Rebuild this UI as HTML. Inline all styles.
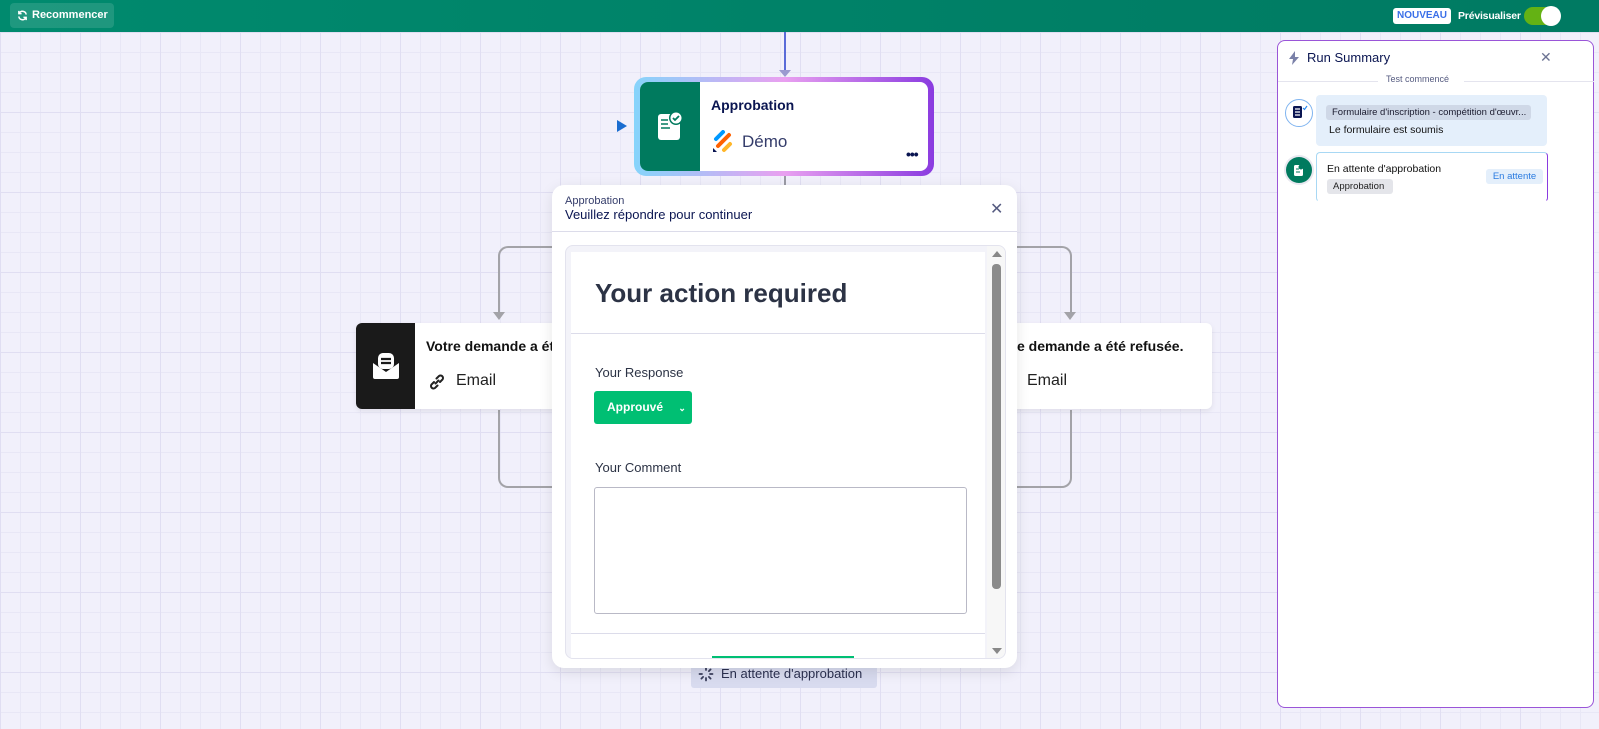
<!DOCTYPE html>
<html><head><meta charset="utf-8"><style>
*{box-sizing:border-box;margin:0;padding:0}
body{width:1599px;height:729px;overflow:hidden;position:relative;font-family:"Liberation Sans",sans-serif;color:#0a1551;
background-color:#f1f0fb;
background-image:linear-gradient(#e0def2 1px,transparent 1px),linear-gradient(90deg,#e0def2 1px,transparent 1px),linear-gradient(#e8e7f6 1px,transparent 1px),linear-gradient(90deg,#e8e7f6 1px,transparent 1px);
background-size:80px 80px,80px 80px,20px 20px,20px 20px;background-position:0 32px,0 32px,0 32px,0 32px}
.abs{position:absolute}
.top{left:0;top:0;width:1599px;height:32px;background:linear-gradient(90deg,#008a6e,#007a62)}
.btn{left:10px;top:3px;width:104px;height:25px;background:rgba(255,255,255,.12);border-radius:4px;color:#fff;font-size:11px;font-weight:bold;line-height:25px;padding-left:22px}
.line{background:#9a9aa4}
</style></head><body>
<div class="abs top"></div>
<div class="abs btn"><svg class="abs" style="left:7px;top:7px" width="11" height="11" viewBox="0 0 12 12" fill="none" stroke="#fff" stroke-width="1.6"><path d="M10 5A4 4 0 0 0 2.5 3.5M2 7a4 4 0 0 0 7.5 1.5"/><path d="M2 1v3h3M10 11V8H7"/></svg>Recommencer</div>
<div class="abs" style="left:1393px;top:8px;width:58px;height:16px;background:#fff;border-radius:3px;color:#3a6fe8;font-size:10px;font-weight:bold;text-align:center;line-height:16px">NOUVEAU</div>
<div class="abs" style="left:1458px;top:10px;color:#fff;font-size:10.5px;font-weight:bold;letter-spacing:-0.2px">Prévisualiser</div>
<div class="abs" style="left:1524px;top:7px;width:36px;height:18px;background:#64b214;border-radius:9px"></div>
<div class="abs" style="left:1541px;top:6px;width:20px;height:20px;background:#fff;border-radius:50%"></div>

<!-- connectors -->
<div class="abs" style="left:784px;top:32px;width:2px;height:42px;background:#5a6bd8"></div>
<div class="abs" style="left:779px;top:70px;border:6px solid transparent;border-top:7px solid #9a9ad0;border-bottom:0"></div>
<div class="abs line" style="left:784px;top:175px;width:2px;height:12px"></div>
<div class="abs" style="left:498px;top:246px;width:60px;height:70px;border:2px solid #a3a3a8;border-right:0;border-bottom:0;border-radius:10px 0 0 0"></div>
<div class="abs" style="left:493px;top:312px;border:6px solid transparent;border-top:8px solid #a3a3a8;border-bottom:0"></div>
<div class="abs" style="left:498px;top:410px;width:60px;height:78px;border:2px solid #a3a3a8;border-right:0;border-top:0;border-radius:0 0 0 10px"></div>
<div class="abs" style="left:1012px;top:246px;width:60px;height:70px;border:2px solid #a3a3a8;border-left:0;border-bottom:0;border-radius:0 10px 0 0"></div>
<div class="abs" style="left:1064px;top:312px;border:6px solid transparent;border-top:8px solid #a3a3a8;border-bottom:0"></div>
<div class="abs" style="left:1012px;top:410px;width:60px;height:78px;border:2px solid #a3a3a8;border-left:0;border-top:0;border-radius:0 0 10px 0"></div>

<!-- approbation node -->
<div class="abs" style="left:617px;top:120px;border:6px solid transparent;border-left:10px solid #1a6dd0;border-right:0"></div>
<div class="abs" style="left:634px;top:77px;width:300px;height:99px;border-radius:12px;background:linear-gradient(90deg,#86d4fb,#e9a0f0 50%,#8a3be0)"></div>
<div class="abs" style="left:640px;top:82px;width:288px;height:89px;border-radius:8px;background:#fff;overflow:hidden">
 <div class="abs" style="left:0;top:0;width:60px;height:89px;background:#007a5e"></div>
 <svg class="abs" style="left:16px;top:28px" width="30" height="32" viewBox="0 0 30 32"><rect x="2" y="4" width="22" height="26" rx="3" fill="#fff"/><circle cx="20" cy="8" r="7" fill="#007a5e"/><circle cx="20" cy="8" r="5.5" fill="#fff"/><path d="M17 8l2 2 4-4" stroke="#007a5e" stroke-width="1.8" fill="none"/><path d="M5 10h7M5 14h7M5 18h9" stroke="#007a5e" stroke-width="1.6"/></svg>
 <div class="abs" style="left:71px;top:15px;font-size:14px;font-weight:bold">Approbation</div>
 <svg class="abs" style="left:72px;top:48px" width="22" height="24" viewBox="0 0 22 24"><path d="M4 9L11 2" stroke="#0099ff" stroke-width="4" stroke-linecap="round"/><path d="M6 16L17 5" stroke="#ff6100" stroke-width="4" stroke-linecap="round"/><path d="M12 20L18 14" stroke="#ffb629" stroke-width="4" stroke-linecap="round"/><path d="M1 18l4 4H1z" fill="#0a1551"/></svg>
 <div class="abs" style="left:102px;top:50px;font-size:17px;color:#343c6a">Démo</div>
 <div class="abs" style="left:266px;top:64px;font-size:14px;font-weight:bold;letter-spacing:-1px">•••</div>
</div>

<!-- email nodes -->
<div class="abs" style="left:356px;top:323px;width:220px;height:86px;background:#fff;border-radius:6px;box-shadow:0 2px 6px rgba(0,0,0,.08);overflow:hidden">
 <div class="abs" style="left:0;top:0;width:59px;height:86px;background:#1a1a1a"></div>
 <svg class="abs" style="left:14px;top:28px" width="32" height="32" viewBox="0 0 32 32"><path d="M3 12l13 9 13-9v14a2 2 0 0 1-2 2H5a2 2 0 0 1-2-2z" fill="#fff"/><rect x="8" y="2" width="16" height="16" rx="5" fill="#fff"/><path d="M11 8h10M11 12h10" stroke="#1a1a1a" stroke-width="2.2"/></svg>
 <div class="abs" style="left:70px;top:15px;font-size:14px;font-weight:bold;color:#111;white-space:nowrap">Votre demande a été acceptée.</div>
 <svg class="abs" style="left:72px;top:50px" width="18" height="18" viewBox="0 0 18 18" fill="none" stroke="#222" stroke-width="2" stroke-linecap="round"><path d="M7.5 10.5l3-3M6 9L3.5 11.5a2.5 2.5 0 0 0 3.5 3.5L9.5 12.5M12 9l2.5-2.5A2.5 2.5 0 0 0 11 3L8.5 5.5"/></svg>
 <div class="abs" style="left:100px;top:49px;font-size:16px;color:#222">Email</div>
</div>
<div class="abs" style="left:990px;top:323px;width:222px;height:86px;background:#fff;border-radius:6px;box-shadow:0 2px 6px rgba(0,0,0,.08);overflow:hidden">
 <div class="abs" style="left:0;top:15px;font-size:14px;font-weight:bold;color:#111;white-space:nowrap">Votre demande a été refusée.</div>
 <div class="abs" style="left:37px;top:49px;font-size:16px;color:#222">Email</div>
</div>

<!-- waiting pill -->
<div class="abs" style="left:691px;top:658px;width:186px;height:30px;background:#d8dbef;border-radius:3px"></div>
<svg class="abs" style="left:698px;top:666px" width="16" height="16" viewBox="0 0 16 16" stroke="#3a3f5c" stroke-width="1.8" stroke-linecap="round"><path d="M8 1.5v2.5M12.6 3.4l-1.7 1.7M14.5 8H12M12.6 12.6l-1.7-1.7M8 14.5V12M3.4 12.6l1.7-1.7M1.5 8H4" /></svg>
<div class="abs" style="left:721px;top:666px;font-size:13px;color:#2b3050">En attente d'approbation</div>

<!-- modal -->
<div class="abs" style="left:552px;top:185px;width:465px;height:483px;background:#fff;border-radius:12px;box-shadow:0 4px 14px rgba(0,0,0,.1)">
 <div class="abs" style="left:13px;top:10px;font-size:11px;color:#343c6a">Approbation</div>
 <div class="abs" style="left:13px;top:22px;font-size:13px;color:#0a1551">Veuillez répondre pour continuer</div>
 <div class="abs" style="left:438px;top:14px;font-size:16px;color:#555b80">✕</div>
 <div class="abs" style="left:0;top:46px;width:465px;height:1px;background:#dcdcea"></div>
 <div class="abs" style="left:13px;top:60px;width:441px;height:414px;background:#f3f3f9;border:1px solid #e3e3ee;border-radius:8px;overflow:hidden">
  <div class="abs" style="left:5px;top:6px;width:414px;height:420px;background:#fff">
   <div class="abs" style="left:24px;top:26px;font-size:26px;font-weight:bold;color:#2c3345">Your action required</div>
   <div class="abs" style="left:0;top:81px;width:414px;height:1px;background:#dcdcea"></div>
   <div class="abs" style="left:24px;top:113px;font-size:13px;color:#2c3345">Your Response</div>
   <div class="abs" style="left:23px;top:139px;width:98px;height:33px;background:#00bf73;border-radius:3px;color:#fff;font-size:12px;font-weight:bold;line-height:33px;padding-left:13px">Approuvé <span style="font-size:9px;margin-left:12px">⌄</span></div>
   <div class="abs" style="left:24px;top:208px;font-size:13px;color:#2c3345">Your Comment</div>
   <div class="abs" style="left:23px;top:235px;width:373px;height:127px;border:1px solid #b9b9c6;border-radius:3px"></div>
   <div class="abs" style="left:0;top:381px;width:414px;height:1px;background:#dcdcea"></div>
   <div class="abs" style="left:141px;top:404px;width:142px;height:3px;background:#00bf73"></div>
  </div>
  <div class="abs" style="left:421px;top:0;width:20px;height:414px;background:#f7f7f7"></div>
  <div class="abs" style="left:426px;top:5px;border:5px solid transparent;border-bottom:6px solid #888;border-top:0"></div>
  <div class="abs" style="left:426px;top:18px;width:9px;height:325px;background:#8b8b8b;border-radius:4px"></div>
  <div class="abs" style="left:426px;top:402px;border:5px solid transparent;border-top:6px solid #888;border-bottom:0"></div>
 </div>
</div>

<!-- run summary -->
<div class="abs" style="left:1277px;top:40px;width:317px;height:668px;background:#fff;border:1.5px solid #9a55d8;border-radius:8px">
 <svg class="abs" style="left:10px;top:10px" width="12" height="14" viewBox="0 0 12 14"><path d="M7 0L1 8h4l-1 6 7-8H7z" fill="#7a80a8"/></svg>
 <div class="abs" style="left:29px;top:9px;font-size:13px;color:#0a1551">Run Summary</div>
 <div class="abs" style="left:262px;top:8px;font-size:14px;color:#6c7393">✕</div>
 <div class="abs" style="left:0;top:40px;width:100px;height:1px;background:#e4e4ee"></div>
 <div class="abs" style="left:186px;top:40px;width:130px;height:1px;background:#e4e4ee"></div>
 <div class="abs" style="left:108px;top:33px;font-size:9px;color:#555b80">Test commencé</div>
 <div class="abs" style="left:7px;top:58px;width:28px;height:28px;border:1px solid #7fb4f0;border-radius:50%;background:#fff"></div>
 <svg class="abs" style="left:14px;top:64px" width="16" height="16" viewBox="0 0 16 16"><rect x="1" y="1" width="9" height="12" rx="1.5" fill="#0a1551"/><path d="M3 4h5M3 7h5M3 10h5" stroke="#fff" stroke-width="1.2"/><path d="M11 3l1.5 1.5L15 1" stroke="#2a8af0" stroke-width="1.2" fill="none"/></svg>
 <div class="abs" style="left:38px;top:54px;width:231px;height:51px;background:#e4effb;border-radius:4px">
  <div class="abs" style="left:10px;top:10px;width:205px;height:15px;background:#cfd8e7;border-radius:3px;font-size:9.5px;line-height:15px;padding-left:6px;white-space:nowrap;overflow:hidden;color:#1a1a2e">Formulaire d'inscription - compétition d'œuvr...</div>
  <div class="abs" style="left:13px;top:29px;font-size:10.5px;color:#111">Le formulaire est soumis</div>
 </div>
 <div class="abs" style="left:8px;top:116px;width:26px;height:26px;border-radius:50%;background:#007a5e;box-shadow:0 0 0 2px #e8e8f0"></div>
 <svg class="abs" style="left:15px;top:122px" width="12" height="14" viewBox="0 0 12 14"><rect x="1" y="2" width="9" height="11" rx="1.5" fill="#fff"/><circle cx="8" cy="4" r="2.5" fill="#007a5e"/><path d="M3 6h3M3 9h4" stroke="#007a5e"/></svg>
 <div class="abs" style="left:38px;top:111px;width:232px;height:50px;border:1px solid;border-color:#a8d8f4 #8a3be0 transparent #a8d8f4;border-radius:4px">
  <div class="abs" style="left:10px;top:10px;font-size:10.5px;color:#111">En attente d'approbation</div>
  <div class="abs" style="left:10px;top:26px;width:66px;height:15px;background:#e4e5ea;border-radius:3px;font-size:9.5px;line-height:15px;padding-left:6px;color:#222">Approbation</div>
  <div class="abs" style="left:169px;top:16px;width:57px;height:15px;background:#e4effb;border-radius:3px;font-size:9.5px;line-height:15px;text-align:center;color:#2a7be0">En attente</div>
 </div>
</div>
</body></html>
